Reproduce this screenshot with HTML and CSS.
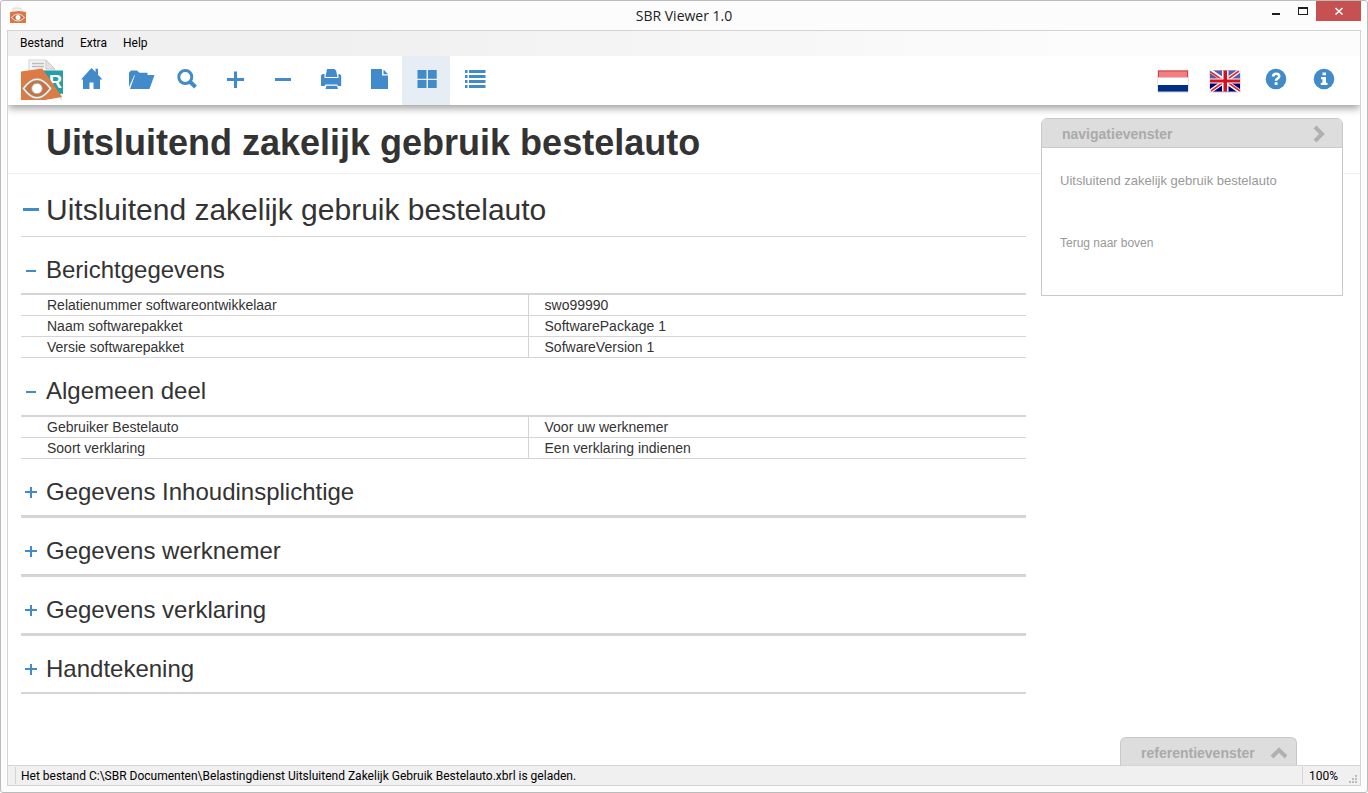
FILE: index.html
```html
<!DOCTYPE html>
<html lang="nl">
<head>
<meta charset="utf-8">
<title>SBR Viewer 1.0</title>
<link rel="stylesheet" href="styles.css">
</head>
<body>
<div class="window">
  <header class="titlebar">
    <svg class="app-icon" viewBox="0 0 16 17" aria-hidden="true">
      <path d="M3 1h7l3 3v3H3z" fill="#f1f1f1" stroke="#ccc" stroke-width=".6"/>
      <path d="M9 5h7v8H9z" fill="#e08a5a"/>
      <path d="M0 5l9-1 7 1v11H0z" fill="#dd7742"/>
      <path d="M1.500 10.500q6.500-7 13 0q-6.500 7-13 0z" fill="#b9683f" stroke="#eee2da" stroke-width="1.100"/>
      <circle cx="8" cy="10.500" r="2.500" fill="#fff"/>
    </svg>
    <div class="title">SBR Viewer 1.0</div>
    <div class="window-buttons">
      <button type="button" class="wbtn" aria-label="Minimaliseren"><svg width="12" height="12" viewBox="0 0 12 12"><path d="M2 8h8v2H2z" fill="#1e1e1e"/></svg></button>
      <button type="button" class="wbtn" aria-label="Maximaliseren"><svg width="12" height="12" viewBox="0 0 12 12"><path d="M1 2h10v8H1zM2 4v5h8V4z" fill="#1e1e1e" fill-rule="evenodd"/></svg></button>
      <button type="button" class="wbtn close" aria-label="Sluiten"><svg width="12" height="12" viewBox="0 0 12 12"><path d="M2.500 3l7 6.500M9.500 3l-7 6.500" stroke="#fff" stroke-width="1.600"/></svg></button>
    </div>
  </header>

  <div class="frame">
    <nav class="menubar">
      <button type="button">Bestand</button>
      <button type="button">Extra</button>
      <button type="button">Help</button>
    </nav>

    <div class="toolbar">
      <svg class="logo" viewBox="0 0 42 49" aria-label="SBR">
        <path d="M8 4h17l9 10v8H8z" fill="#f4f4f4" stroke="#d4d4d4"/>
        <path d="M25 4v9h9z" fill="#e3e3e3" stroke="#c9c9c9"/>
        <path d="M11 7.500h12M11 10.500h12" stroke="#bcbcbc" stroke-width="1.500"/>
        <path d="M20 14.500h22V38H20z" fill="#259fa6"/>
        <text x="28" y="32" class="logo-r">R</text>
        <path d="M36 40l5-3v8z" fill="#e9e9e9"/>
        <path d="M0 15.500l21-3 6 8 14 20.500-17 3H0z" fill="#dd7b45"/>
        <path d="M2.500 32.500Q16 14 29.500 32.500Q16 51 2.500 32.500z" fill="#c9713f" stroke="#9aa7a0" stroke-width="2.600"/>
        <path d="M2.500 32.500Q16 14 29.500 32.500Q16 51 2.500 32.500z" fill="none" stroke="#f5eee8" stroke-width="1.300"/>
        <circle cx="16" cy="32.500" r="5.300" fill="#fff" stroke="#a7aaa2"/>
      </svg>
      <div class="tools">
        <button type="button" class="tool" aria-label="Start"><svg viewBox="0 0 48 49"><path d="M15 23.500L25.500 12l4 4v-3.300H32v6l4.500 4.800H34V33h-6.500v-6.500h-4V33H17v-9.500z"/></svg></button>
        <button type="button" class="tool" aria-label="Openen"><svg viewBox="0 0 48 49"><path d="M15 31V16.500l2-2h6l2.500 2.300h8V19.300H20.300z"/><path d="M21 19H40.500L35.500 33H16z"/></svg></button>
        <button type="button" class="tool" aria-label="Zoeken"><svg viewBox="0 0 48 49"><g class="line"><circle cx="23.300" cy="21" r="6.500" stroke-width="3"/><path d="M28 25.700l5.500 5.300" stroke-width="4"/></g></svg></button>
        <button type="button" class="tool" aria-label="Inzoomen"><svg viewBox="0 0 48 49"><path d="M17 22h7v-6.500h3V22h7v3h-7v7h-3v-7h-7z"/></svg></button>
        <button type="button" class="tool" aria-label="Uitzoomen"><svg viewBox="0 0 48 49"><path d="M17 22h16v3H17z"/></svg></button>
        <button type="button" class="tool" aria-label="Afdrukken"><svg viewBox="0 0 48 49"><path d="M21 13h7.500l1.500 1.500 1.500 6.500h-12z"/><path d="M15 19.500l1.500-1.500H18.500V22h14V18h1l1.700 1.500V30H32l-.8-1.500H19.500L18.500 30H15z"/><path d="M20.500 29.700h10.500l1 3.300h-12.500z"/></svg></button>
        <button type="button" class="tool" aria-label="Document"><svg viewBox="0 0 48 49"><path d="M17 13h11v6.500h6V33H17z"/><path d="M29.500 13.500l4.500 4.700h-4.500z"/></svg></button>
        <button type="button" class="tool active" aria-label="Blokweergave"><svg viewBox="0 0 48 49"><path d="M15.500 14h9v8.700h-9zM26 14h8.700v8.700H26zM15.500 24h9v8h-9zM26 24h8.700v8H26z"/></svg></button>
        <button type="button" class="tool" aria-label="Lijstweergave"><svg viewBox="0 0 48 49"><path d="M15 14h2.500v3H15zM19 14h16.500v3H19zM15 19h2.500v3H15zM19 19h16.500v3H19zM15 24h2.500v3H15zM19 24h16.500v3H19zM15 29h2.500v3H15zM19 29h16.500v3H19z"/></svg></button>
      </div>
      <div class="tools-right">
        <button type="button" class="flag" aria-label="Nederlands">
          <svg viewBox="0 0 32 24"><rect x=".5" y="1" width="31" height="22.500" fill="#ccc"/><path d="M1 1.500h30v7H1z" fill="#e8363d"/><path d="M2 2.500h28v6H2z" fill="#f07f80"/><path d="M1 8.500h30v7.500H1z" fill="#fff"/><path d="M1 16h30v6.500H1z" fill="#002f88"/></svg>
        </button>
        <button type="button" class="flag" aria-label="English">
          <svg viewBox="0 0 32 24"><rect x=".5" y="1" width="31" height="22.500" fill="#ccc"/><path d="M1 1.500h30v10.500H1z" fill="#5a5aa6"/><path d="M1 12h30v10.500H1z" fill="#00006e"/><path d="M1 1.500l30 21M31 1.500l-30 21" stroke="#fff" stroke-width="4"/><path d="M1 2.500l13 9M30 2l-12 8.500M2 22l12-8.500M31 22l-13-9" stroke="#d8303c" stroke-width="1.600"/><path d="M13 1.500h6.500v8H31v5H19.500v8H13v-8H1v-5h12z" fill="#fff"/><path d="M14.500 1.500h3.500v9h13v3H18v9h-3.500v-9H1v-3h13.500z" fill="#d5101f"/></svg>
        </button>
        <button type="button" class="tool" aria-label="Hulp"><svg viewBox="0 0 48 49"><circle cx="24" cy="23" r="10.300"/><path d="M21 20.500q.3-2.800 3.200-2.800q3 0 3 2.500q0 1.500-1.700 2.400q-1.500.8-1.500 2.200" fill="none" stroke="#fff" stroke-width="2.600"/><path d="M22.700 26.200h2.800v2.800h-2.800z" class="cut"/></svg></button>
        <button type="button" class="tool" aria-label="Info"><svg viewBox="0 0 48 49"><circle cx="24" cy="23" r="10.300"/><path d="M22.500 16.500h3.500v2.800h-3.500zM21 21h5v5.800h1.500V29H20.800v-2.200h1.700v-3.600H21z" class="cut"/></svg></button>
      </div>
    </div>

    <div class="content">
      <h1 class="page-title">Uitsluitend zakelijk gebruik bestelauto</h1>
      <main class="report">
        <h2 class="report-title"><button type="button" aria-label="Inklappen" class="toggle"><svg width="20" height="20" viewBox="0 0 20 20"><path d="M2 8h16v3H2z"/></svg></button>Uitsluitend zakelijk gebruik bestelauto</h2>

        <section class="section">
          <h3><button type="button" aria-label="Inklappen" class="toggle"><svg width="20" height="20" viewBox="0 0 20 20"><path d="M5 10h10v2H5z"/></svg></button>Berichtgegevens</h3>
          <table>
            <tr><th scope="row">Relatienummer softwareontwikkelaar</th><td>swo99990</td></tr>
            <tr><th scope="row">Naam softwarepakket</th><td>SoftwarePackage 1</td></tr>
            <tr><th scope="row">Versie softwarepakket</th><td>SofwareVersion 1</td></tr>
          </table>
        </section>

        <section class="section">
          <h3><button type="button" aria-label="Inklappen" class="toggle"><svg width="20" height="20" viewBox="0 0 20 20"><path d="M5 10h10v2H5z"/></svg></button>Algemeen deel</h3>
          <table>
            <tr><th scope="row">Gebruiker Bestelauto</th><td>Voor uw werknemer</td></tr>
            <tr><th scope="row">Soort verklaring</th><td>Een verklaring indienen</td></tr>
          </table>
        </section>

        <section class="section collapsed">
          <h3><button type="button" aria-label="Uitklappen" class="toggle"><svg width="20" height="20" viewBox="0 0 20 20"><path d="M4 9h5V5h2v4h5v2h-5v5H9v-5H4z"/></svg></button>Gegevens Inhoudinsplichtige</h3>
        </section>
        <section class="section collapsed">
          <h3><button type="button" aria-label="Uitklappen" class="toggle"><svg width="20" height="20" viewBox="0 0 20 20"><path d="M4 9h5V5h2v4h5v2h-5v5H9v-5H4z"/></svg></button>Gegevens werknemer</h3>
        </section>
        <section class="section collapsed">
          <h3><button type="button" aria-label="Uitklappen" class="toggle"><svg width="20" height="20" viewBox="0 0 20 20"><path d="M4 9h5V5h2v4h5v2h-5v5H9v-5H4z"/></svg></button>Gegevens verklaring</h3>
        </section>
        <section class="section collapsed last">
          <h3><button type="button" aria-label="Uitklappen" class="toggle"><svg width="20" height="20" viewBox="0 0 20 20"><path d="M4 9h5V5h2v4h5v2h-5v5H9v-5H4z"/></svg></button>Handtekening</h3>
        </section>
      </main>

      <aside class="nav-panel">
        <button type="button" class="panel-head">navigatievenster<svg width="18" height="18" viewBox="0 0 18 18"><path d="M5 2l7 7-7 7" /></svg></button>
        <div class="panel-body">
          <a href="#" class="nav-main">Uitsluitend zakelijk gebruik bestelauto</a>
          <a href="#" class="nav-top">Terug naar boven</a>
        </div>
      </aside>

      <button type="button" class="ref-tab">referentievenster<svg width="18" height="18" viewBox="0 0 18 18"><path d="M2 13l7-7 7 7"/></svg></button>
    </div>

    <footer class="statusbar">
      <span class="status-text">Het bestand C:\SBR Documenten\Belastingdienst Uitsluitend Zakelijk Gebruik Bestelauto.xbrl is geladen.</span>
      <span class="zoom-level">100%</span>
      <svg class="grip" width="9" height="9" viewBox="0 0 9 9" aria-hidden="true"><path d="M6 0h2v2H6zM3 3h2v2H3zM6 3h2v2H6zM0 6h2v2H0zM3 6h2v2H3zM6 6h2v2H6z" fill="#bcbcbc"/></svg>
    </footer>
  </div>
</div>
</body>
</html>
```
FILE: styles.css
```css
* { box-sizing: border-box; }

body {
  margin: 0;
  background: #fff;
  color: #333;
  font-family: "Liberation Sans", Arial, sans-serif;
  font-size: 14px;
}

button {
  margin: 0;
  padding: 0;
  border: 0;
  background: none;
  color: inherit;
  font: inherit;
}

h1, h2, h3 { margin: 0; }

.window {
  display: flex;
  flex-direction: column;
  height: 100vh;
  padding: 0 6px 6px;
  border: 1px solid #bbb;
  border-radius: 3px;
  background: #fcfcfc;
}

/* Title bar */
.titlebar {
  display: grid;
  grid-template-columns: 1fr auto 1fr;
  align-items: start;
  height: 29px;
  color: #222;
  font: 14px/29px "Open Sans", "Segoe UI", sans-serif;
}
.app-icon {
  width: 16px;
  height: 17px;
  margin: 6px 0 0 3px;
}
.window-buttons {
  display: flex;
  justify-content: flex-end;
}
.wbtn {
  display: flex;
  align-items: center;
  justify-content: center;
  width: 27px;
  height: 20px;
}
.wbtn.close {
  width: 45px;
  background: #c75050;
}

.frame {
  display: flex;
  flex: 1;
  flex-direction: column;
  min-height: 0;
  border: 1px solid #d4d4d4;
}

/* Menu and toolbar */
.menubar {
  display: flex;
  gap: 16px;
  height: 25px;
  padding: 0 12px;
  background: linear-gradient(90deg, #f0f0f0 0 25%, #fcfcfc 80%);
  color: #000;
  font: 12px/25px Roboto, "Segoe UI", sans-serif;
}
.toolbar {
  position: relative;
  z-index: 1;
  display: flex;
  gap: 3px;
  height: 49px;
  padding: 0 12px 0 13px;
  background: #fff;
  box-shadow: 0 3px 8px rgba(0, 0, 0, .4);
  clip-path: inset(0 0 -12px 0);
}
.logo {
  width: 42px;
  height: 49px;
}
.logo-r {
  fill: #fff;
  font: bold 18px "Liberation Sans", Arial, sans-serif;
}
.tools, .tools-right { display: flex; }
.tools-right { margin-left: auto; }
.tool {
  width: 48px;
  height: 49px;
}
.tool.active { background: #e6edf4; }
.tool svg {
  display: block;
  width: 48px;
  height: 49px;
  fill: #428bca;
}
.tool .cut { fill: #fff; }
.line {
  fill: none;
  stroke: #428bca;
}
.flag {
  width: 52px;
  height: 49px;
}
.flag svg {
  display: block;
  width: 32px;
  height: 24px;
  margin-left: 9px;
}

/* Report */
.content {
  position: relative;
  flex: 1;
  min-height: 0;
  background: #fff;
}
.page-title {
  padding: 18px 38px 10px;
  border-bottom: 1px solid #eee;
  font-size: 36px;
  line-height: 40px;
}
.report { margin: 0 334px 0 13px; }
.report-title, .section h3 {
  display: flex;
  align-items: center;
  font-weight: normal;
}
.report-title {
  padding: 20px 0 10px;
  border-bottom: 1px solid #d5d5d5;
  font-size: 30px;
  line-height: 32px;
}
.section h3 {
  padding: 20px 0 11px;
  border-bottom: 2px solid #d5d5d5;
  font-size: 24px;
  line-height: 26px;
}
.section:first-of-type h3, .section.collapsed h3 { padding-bottom: 10px; }
.section.collapsed h3 { border-bottom-width: 3px; }
.section.last h3 { border-bottom-width: 2px; }
.toggle {
  width: 20px;
  margin-right: 5px;
}
.toggle svg {
  display: block;
  fill: #428bca;
}
.section table {
  width: 100%;
  border-collapse: separate;
  border-spacing: 0;
  table-layout: fixed;
}
.section th, .section td {
  height: 21px;
  padding: 0 0 0 26px;
  border-bottom: 1px solid #d5d5d5;
  font-weight: normal;
  line-height: 20px;
  text-align: left;
}
.section th {
  width: 50.5%;
  border-right: 1px solid #d5d5d5;
}
.section td { padding-left: 16px; }

/* Panels over the report */
.nav-panel {
  position: absolute;
  top: 13px;
  right: 17px;
  width: 302px;
  border: 1px solid #c8c8c8;
  border-radius: 6px 6px 0 0;
  background: #fff;
}
.panel-head {
  display: flex;
  align-items: center;
  justify-content: space-between;
  width: 100%;
  height: 29px;
  padding: 1px 14px 0 20px;
  border-bottom: 1px solid #c8c8c8;
  border-radius: 5px 5px 0 0;
  background: #ddd;
  color: #aaa;
  font-size: 14px;
  font-weight: bold;
}
.panel-head svg path, .ref-tab svg path {
  fill: none;
  stroke: #b0b0b0;
  stroke-width: 4;
}
.panel-body {
  display: flex;
  flex-direction: column;
  gap: 46px;
  padding: 25px 18px 44px;
  font-size: 13px;
  line-height: 16px;
}
.panel-body a {
  color: #999;
  text-decoration: none;
}
.panel-body .nav-top { font-size: 12px; }
.ref-tab {
  position: absolute;
  right: 63px;
  bottom: 0;
  display: flex;
  align-items: center;
  justify-content: space-between;
  width: 177px;
  height: 28px;
  padding: 2px 8px 0 20px;
  border: 1px solid #c8c8c8;
  border-bottom: 0;
  border-radius: 6px 6px 0 0;
  background: #ddd;
  color: #aaa;
  font-size: 14px;
  font-weight: bold;
}

/* Status bar */
.statusbar {
  display: flex;
  height: 20px;
  padding: 1px 2px 1px 7px;
  border-top: 1px solid #d4d4d4;
  background: #f0f0f0;
  color: #000;
  font: 12px/18px Roboto, "Segoe UI", sans-serif;
}
.status-text {
  flex: 1;
  padding-left: 5px;
  border-left: 1px solid #d4d4d4;
}
.zoom-level {
  width: 47px;
  padding-left: 6px;
  border-left: 1px solid #d4d4d4;
}
.grip { align-self: flex-end; }
```
